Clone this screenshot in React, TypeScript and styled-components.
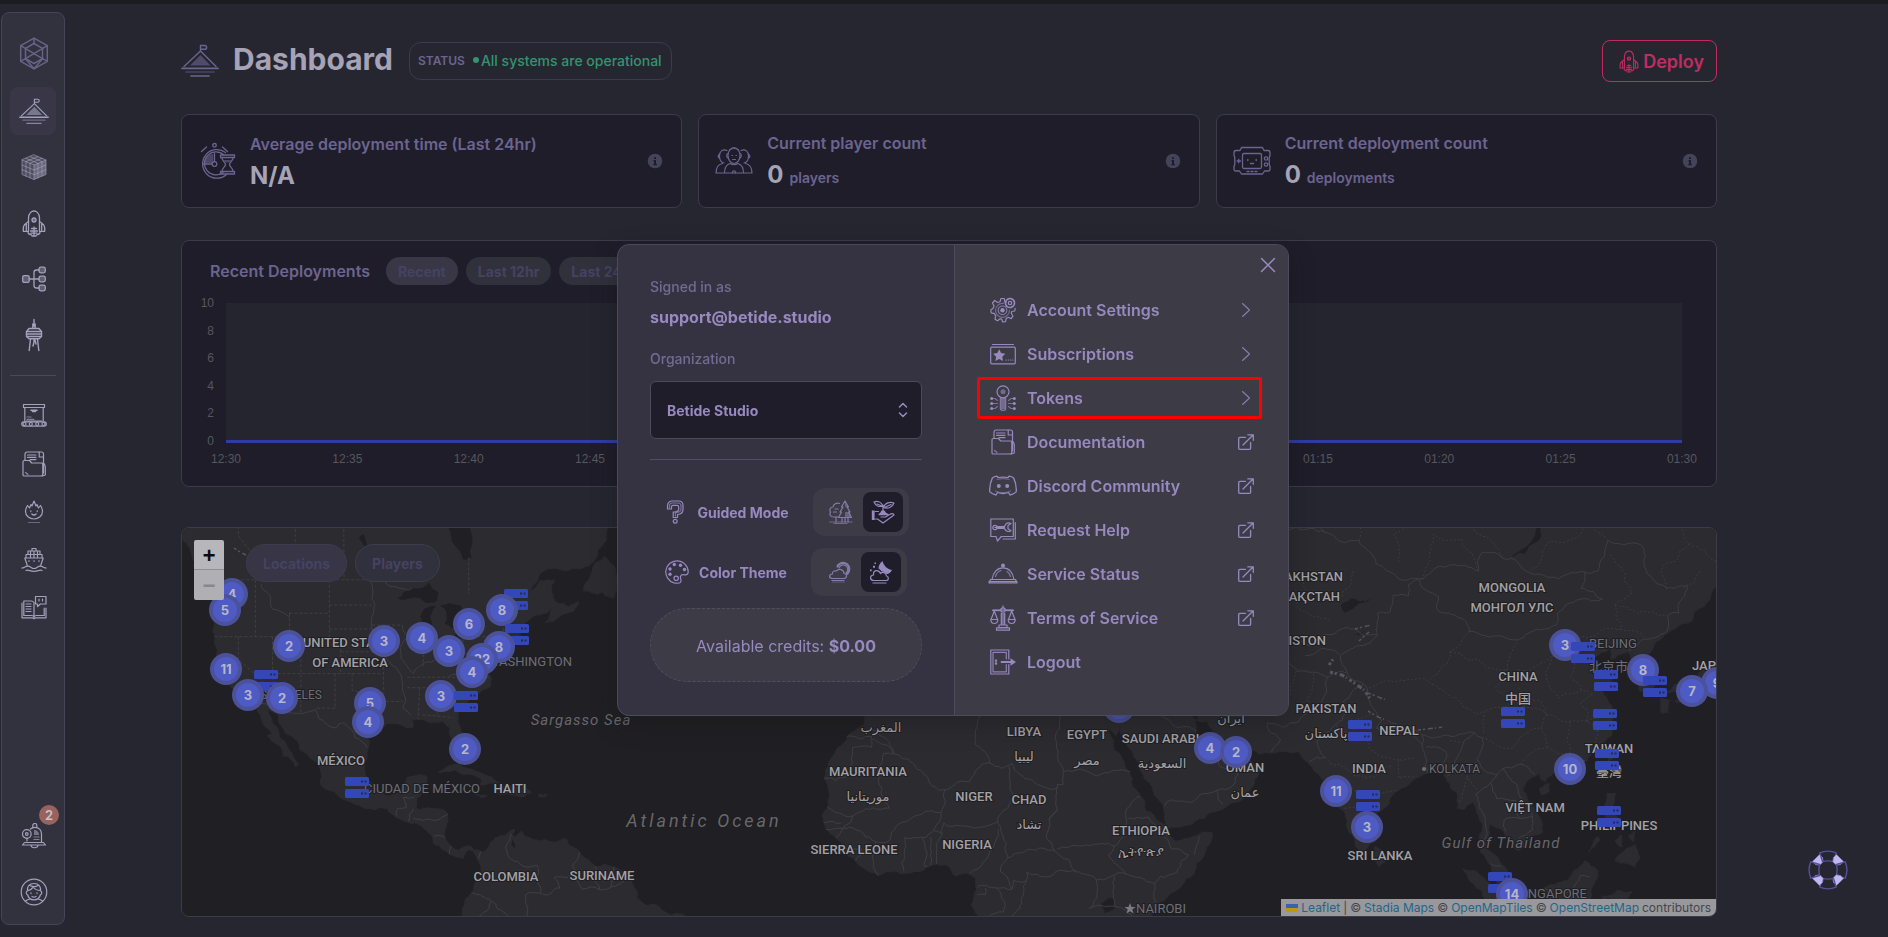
import React from "react";
import styled, { createGlobalStyle, css } from "styled-components";

const GlobalStyle = createGlobalStyle`
  *, *::before, *::after { box-sizing: border-box; }
  body {
    margin: 0;
    background: #262631;
    color: #6c6490;
    font-family: Inter, "Liberation Sans", sans-serif;
    font-size: 14px;
  }
  button, select, input { font: inherit; color: inherit; }
  h1, h2, p, ul, dl, dd, dt { margin: 0; padding: 0; }
`;

/* ------------------------------------------------------------------ icons */

type IconProps = { w?: number; h?: number };

const Glyph = ({
  w = 26,
  h = 26,
  box = "0 0 26 26",
  sw = 1.2,
  children,
}: IconProps & { box?: string; sw?: number; children: React.ReactNode }) => (
  <svg
    width={w}
    height={h}
    viewBox={box}
    fill="none"
    stroke="currentColor"
    strokeWidth={sw}
    strokeLinecap="round"
    strokeLinejoin="round"
    aria-hidden="true"
  >
    {children}
  </svg>
);

const Solid = { fill: "currentColor", stroke: "none" };
const Tint = { fill: "currentColor", fillOpacity: 0.6, stroke: "none" };

const HexLogo = () => (
  <Glyph w={30} h={33} box="0 0 30 33" sw={1.5}>
    <path d="M15 1.2 28.3 8.7v15.6L15 31.8 1.7 24.3V8.7Z" />
    <path d="M15 6.5 23.5 11.3v10.4L15 26.5l-8.5-4.8V11.3Z" />
    <path d="M1.7 8.7 23.5 21.7M28.3 8.7 6.5 21.7M6.5 21.7l-4.8 2.6M23.5 21.7l4.8 2.6M15 1.2v5.3M6.5 21.7 15 31.8l8.5-10.1" />
  </Glyph>
);

const Summit = ({ w = 30, h = 27 }: IconProps) => (
  <Glyph w={w} h={h} box="0 0 38 34" sw={1.4}>
    <path d="M3 22.5 19.5 7 35 22.5M19.5 7V1.5h4.2a1.8 1.8 0 0 1 0 3.8h-4.2" />
    <path {...Tint} d="M9 21.5 19.5 11 29.5 21.5Z" />
    <path d="M1 24.3h36" strokeWidth="1.7" />
    <path d="M5 28h28" strokeWidth="1.6" opacity=".5" />
    <path d="M10 32h18" strokeWidth="1.8" opacity=".75" />
  </Glyph>
);

const CubeGrid = () => (
  <Glyph sw={1}>
    <path {...Tint} d="M13 .8 25 6v14.5L13 25.5 1 20.5V6Z" fillOpacity=".25" />
    <path {...Tint} d="M13 11 25 6v14.5L13 25.5Z" fillOpacity=".35" />
    <path
      opacity=".6"
      d="M13 .8 25 6v14.5L13 25.5 1 20.5V6ZM1 6l12 5 12-5M13 11v14.5M5 7.7v14.5M9 9.3v14.5M17 9.3v14.5M21 7.7v14.5M1 11l12 5 12-5M1 15.700l12 5 12-5M5 4.300l12 5M9 2.600l12 5M21 4.300l-12 5M17 2.600l-12 5"
    />
  </Glyph>
);

const Rocket = ({ w = 24, h = 27 }: IconProps) => (
  <Glyph w={w} h={h} box="0 0 24 27" sw={1.3}>
    <path d="M6.500 21V7.500C7 3.500 9.500 1 12 1s5 2.500 5.500 6.500V21" />
    <circle cx="12" cy="10" r="2" fill="currentColor" fillOpacity=".5" />
    <path d="M6.500 11.500C3 13.500 1.300 15.500 1.300 18v3.300h5.200M17.500 11.500c3.500 2 5.200 4 5.200 6.500v3.300h-5.200M4.300 14v6M19.700 14v6" />
    <path d="M9.500 18.500h5M12 17v8.500M8.500 21h7M6 22.500c.5 1.700 2 2.300 3.500 2.300M18 22.500c-.5 1.700-2 2.300-3.500 2.300M9 23.200h6M10 26h4" />
  </Glyph>
);

const TreeNodes = () => (
  <Glyph sw={1.3}>
    <rect x="1.700" y="9.600" width="6.500" height="6.800" rx="1.500" fill="currentColor" fillOpacity=".4" />
    <rect x="18" y="1.200" width="6.300" height="5.600" rx="1.800" fill="currentColor" fillOpacity=".4" />
    <rect x="18" y="10.200" width="6.300" height="5.600" rx="1.800" fill="currentColor" fillOpacity=".4" />
    <rect x="18" y="19.200" width="6.300" height="5.600" rx="1.800" fill="currentColor" fillOpacity=".4" />
    <path d="M8.200 13H18M18 4h-2.500q-2.500 0-2.500 2.500v13q0 2.500 2.500 2.500H18" />
  </Glyph>
);

const Tower = () => (
  <Glyph w={20} h={34} box="0 0 20 34" sw={1.4}>
    <path d="M10 1.500V8M8.800 6v4M11.200 6v4M5 10.500h10l2.500 3.200v4.800L15 20.800H5l-2.500-2.300v-4.800Z" />
    <path d="M2.500 13.500h15M2.500 16h15M3 18.500h14M6.500 21 5.200 32.500M13.500 21l1.300 11.500M10 21v3l-1 4M11 22l1 4" />
  </Glyph>
);

const Conveyor = () => (
  <Glyph>
    <path d="M2.500 1.500h21v3h-21ZM3.800 4.500V18M22.200 4.500V18M5.500 18h15" />
    <rect x=".7" y="18.800" width="24.600" height="4.400" rx="2.200" />
    <circle cx="3.500" cy="21" r="1.500" /><circle cx="9.800" cy="21" r="1.500" />
    <circle cx="16.200" cy="21" r="1.500" /><circle cx="22.500" cy="21" r="1.500" />
    <path d="M10 7.200h6M11.500 8.500h3" strokeWidth="1.600" />
    <path d="M6 14h4M6 16.300h7" opacity=".7" />
  </Glyph>
);

const FolderDoc = () => (
  <Glyph>
    <path d="M4 9V3.300C4 2 4.800 1 6 1h14.500c1.200 0 2 .9 2 2v19" />
    <path d="M2 24V10.800q0-1.300 1.300-1.300h5.200l2.200 2.500H20q1.800 0 1.800 1.800V23q0 2-1.800 2H3.500Q2 25 2 24Z" />
    <path d="M6.500 4H15M6.500 6.300H15M9 8.600h6M18.200 1v5h4.300M22 12c2 1 2.300 3 2.300 5v7l-3 1" />
    <path d="M4.500 21.500 7 23.500" opacity=".8" />
  </Glyph>
);

const Flame = () => (
  <Glyph>
    <path d="M6.500 6.500C5 9 4.500 10.500 4.500 12.500a8.500 7.500 0 0 0 17 0c0-2-.5-3.500-2-6L17.500 9 16 5.500 15 7 13 2l-2 5-1-1.500L8.500 9Z" />
    <path d="M9.800 11.800v.8M16.200 11.800v.8M10.800 15q2.200 2 4.400 0" />
    <path d="M7.500 23.500h11" opacity=".5" />
  </Glyph>
);

const Ship = () => (
  <Glyph>
    <path d="M11 4V1.500h4V4M7 4h12v3.500H7ZM5 7.500h16v3.500H5ZM9.500 4v7M13 4v7M16.500 4v7M3.800 11h18.400l-2.500 7.500M3.800 11l2.500 7.500" />
    <path d="M7.500 14h1M12.500 14h1M17.500 14h1" />
    <path d="M.8 21c2.500 0 3-1.800 6-1.800s3.500 2.300 6.200 2.300 3.200-2.300 6.200-2.300 3.500 1.800 6 1.800M5 23.500c2-1.200 4 .8 8 .8s6-2 8-.8" />
  </Glyph>
);

const BookChat = () => (
  <Glyph>
    <path d="M13 7.500Q12 6 10.300 6H2.800v14.500h7.500Q13 20.500 13 22ZM1 8v14.800h10.500l1.500 1 1.500-1H25V13" />
    <path d="M5 9h5M5 11.500h5M5 14h5M5 16.500h5" />
    <path d="M23.200 13v7.500h-7.500Q13 20.500 13 22" />
    <path d="M14.500 1.500H25V9h-5.500l-3 2.500V9h-2Z" />
    <path d="M18 4v2M21.500 4v2" />
  </Glyph>
);

const Bell = () => (
  <Glyph>
    <path d="M3.500 19.500h19l2 2.500h-23ZM6 18v-3M20.500 19V11c0-4-2.800-6.700-6.500-6.700-2 0-3.500.7-4.500 1.700M11.800 4V2.500a1.500 1.500 0 0 1 4 0V4M10 22.500c.5 3 6.500 3 7 0" />
    <circle cx="5.800" cy="11" r="4.300" />
    <circle cx="5.800" cy="11" r="1.300" />
    <path {...Tint} d="M13 7v5h5c0-3-2-5-5-5Z" />
    <path d="M13 14h5M13 16.500h5" opacity=".7" />
  </Glyph>
);

const Avatar = () => (
  <Glyph w={28} h={28} box="0 0 28 28">
    <circle cx="14" cy="14" r="12.800" />
    <path d="M7.500 13c-1.700 0-1.700 3.500 0 3.500.7 3 3 5.300 6.500 5.300s5.800-2.300 6.500-5.300c1.700 0 1.700-3.500 0-3.500M7.500 13c-.7-4.500 1.800-7.500 6.500-7.500s7.200 3 6.500 7.500M7.500 12.500c3-.3 4.500-1.500 5.500-3.500 2 2.500 4.500 3.500 7.500 3.500M10 7.500c3 1.500 6 1.500 8 0" />
    <path d="M11 14.800v.8M17 14.800v.8M12 18.500q2 1.300 4 0M5.500 23c1.500-1.300 3-1.800 4.500-2M22.500 23c-1.500-1.300-3-1.800-4.500-2" />
  </Glyph>
);

const Stopwatch = () => (
  <Glyph w={38} h={38} box="0 0 38 38" sw={1.3}>
    <path d="M27.500 10.500A14.300 14.300 0 1 0 28.500 32.500" />
    <path d="M25.800 13A11.500 11.500 0 1 0 25 30.500" />
    <circle cx="16.500" cy="3.300" r="1.800" />
    <path d="M3.500 9.500 8.500 5M29.500 9.500 24.500 5" />
    <path {...Tint} d="M15.300 12v9H6c.3-5 4.300-9 9.300-9Z" />
    <path d="M16.500 11.500v8M5 22h9" />
    <circle cx="16.500" cy="22" r="2.300" />
    <path d="M22.500 13h14v2.500h-14ZM22.500 29.500h14V32h-14ZM24 15.500c0 4 3.500 4.500 3.500 7S24 25.500 24 29.500M35 15.500c0 4-3.500 4.500-3.500 7s3.500 3 3.500 7" />
    <path {...Tint} d="M25.500 18h8c-1 2-2 2.500-4 2.500s-3-.5-4-2.500Z" />
  </Glyph>
);

const Players = () => (
  <Glyph w={38} h={38} box="0 0 38 38" sw={1.2}>
    <ellipse cx="19" cy="13.500" rx="6" ry="8" />
    <path d="M13.200 11.500c-1.800-.3-2.300 4 .3 4.300M24.800 11.500c1.800-.3 2.300 4-.3 4.300M14.500 8q4.500-3 9 0M17 13.500h.5M21 13.500h.5M17.500 17.500h3" />
    <path d="M12 8.500C8 6.500 4.500 9 4.500 14c0 4 2 6.500 4.500 7M4.500 12.500c-1.800 0-1.800 3.500 0 3.500M26 8.500C30 6.500 33.500 9 33.500 14c0 4-2 6.500-4.500 7M33.500 12.500c1.800 0 1.800 3.500 0 3.500" />
    <path d="M1 31c0-5 1.500-8.500 6.500-9.500M37 31c0-5-1.500-8.500-6.500-9.500M9.500 31c0-5 1-8 5.500-9.500q4 2.500 8 0c4.500 1.500 5.500 4.500 5.500 9.500M1 31h36" />
    <path d="M17.500 31c0-3 3-3 3 0" />
  </Glyph>
);

const Console = () => (
  <Glyph w={38} h={38} box="0 0 38 38" sw={1.3}>
    <path d="M8.500 5.500h21l1.500 3h4q2 0 2 2.500v2.500l-.8 2v7l.8 2V27q0 2-2 2h-3.500l-2 3h-21l-2-3H3q-2 0-2-2v-2.500l.8-2v-7l-.8-2V11q0-2.500 2-2.500h4Z" />
    <rect x="9.500" y="11.500" width="19" height="15" rx="1.500" />
    <path d="M4 19h3.500M5.700 17.200v3.600M14.800 17.500v1M23.200 17.500v1M17.500 21.500h3M14 29.500h2M18 29.500h2M22 29.500h2" />
    <circle cx="33" cy="16.500" r="1.700" /><circle cx="33" cy="22.500" r="1.700" />
  </Glyph>
);

const Info = () => (
  <svg width="16" height="16" viewBox="0 0 16 16" aria-hidden="true">
    <circle cx="8" cy="8" r="7.300" fill="#45435a" />
    <path d="M7 4.200h2V6H7ZM6.500 7h2.500v4h1v1.200H6.300V11H7V8.200h-.5Z" fill="#1e1d29" />
  </svg>
);

const Question = () => (
  <Glyph w={24} h={24} box="0 0 24 24">
    <path d="M4.500 9V6Q4.500 1 9.500 1h6Q20 1 20 5.500v4q0 4.500-5.500 5v3h-4.300v-5.500q5.500.3 5.500-3v-2q0-1.700-1.700-1.700H10q-1.500 0-1.500 1.500V9Z" />
    <path d="M6.500 8V5.500Q6.500 3 9.500 3h5.500q3 0 3 3v3q0 3.300-5.600 3.700v3.300" opacity=".7" />
    <circle cx="12.200" cy="21.300" r="1.900" />
  </Glyph>
);

const Palette = () => (
  <Glyph w={24} h={24} box="0 0 24 24">
    <path d="M12 .8a11.200 11.200 0 0 0-3 22c3 .7 5.500.5 6.500-.5 1.500-1.500-.5-3.800 0-5.800.5-1.700 2-2.200 4-1.700 2.500.5 3.700-1 3.700-2.800A11.200 11.200 0 0 0 12 .8Z" />
    <circle {...Solid} cx="9.300" cy="4.500" r="1.700" /><circle {...Solid} cx="15.500" cy="5.200" r="1.700" />
    <circle {...Solid} cx="5" cy="9" r="1.700" /><circle {...Solid} cx="5" cy="14.300" r="1.700" />
    <circle {...Solid} cx="19.500" cy="9.500" r="1.700" />
    <circle cx="11.200" cy="18.300" r="2.200" />
  </Glyph>
);

const Forest = () => (
  <Glyph w={24} h={24} box="0 0 24 24">
    <path d="M9.500 17H4.500C1.500 17 0 14.500 1.500 12.300 0 9.500 1.500 7 4 7c.5-3 3.500-4.500 6.500-3.500M4.500 12h3M6 9h3" />
    <path d="M16 1 12.500 7h1.500l-3 5h1.500l-3 5.500h13L19.500 12H21l-3-5h1.500Z" />
    <path {...Tint} d="M16 2 19 7H16v5h4.500l2 5H16Z" />
    <path d="M7 17v5M16 18v4M19 18v4M13 18v4" />
    <path d="M.8 22h22.400M5 23.500h13" opacity=".75" />
  </Glyph>
);

const Sprout = () => (
  <Glyph w={24} h={24} box="0 0 24 24">
    <path d="M12 12V5M12 6C10 1.500 6 .8 3 2c1.500 3.500 5 5.500 9 4ZM12.500 7.500C14 2.500 19 1.500 23 3c-1.500 4-6 6.500-10.500 4.500ZM6 4l5 2M14.500 7 20 4.500" />
    <path {...Solid} d="M7.500 14q2-1 3-3.500h3q1 2.500 4 3.500v1.300h-10Z" />
    <path {...Solid} d="M.8 10.500h2.800v9.500H.8Z" />
    <path d="M4 11.500h3.500M4 19h2.500l5.500 4 11-8c-.5-1.700-2.500-1.700-4-.7L14.500 17H10" />
  </Glyph>
);

const CloudSun = () => (
  <Glyph w={24} h={24} box="0 0 24 24">
    <path d="M6 18.500h10.500c4 0 4-5 .5-5 0-4-5-5.500-7.500-2.500-2.500-.8-4.500.8-4 3-4 .3-4 4.500.5 4.500ZM5 20.500h12" />
    <path d="M5.500 22h12" opacity=".5" />
    <path d="M12 8a4.500 4.500 0 1 1 7 5" />
    <path d="M10.500 6.500a6.200 6.200 0 0 1 11-.5c1.500 3 .5 6-1.500 8" strokeWidth="2.200" strokeDasharray="2.600 .9" />
  </Glyph>
);

const CloudMoon = () => (
  <Glyph w={24} h={24} box="0 0 24 24">
    <path d="M5 20.500h12c3 0 3-4 .5-4.500-.5-3.500-4-4.500-6-2.500C9.500 9 4 10 4.500 15c-4 .3-4 5.500.5 5.500ZM4 23h13" />
    <path {...Solid} d="M13.500 1c1 4 4 8 9.500 9-1.500 3-4 4.500-5.500 4-1.500-2-3.500-2.800-5-2.500-.7-1.500-2-2.500-3-3C9.500 5.500 11 3 13.500 1Z" />
    <path {...Solid} d="M4 5.800h2v2H4ZM1 9.500h1.700v1.700H1ZM5.500 2.500H7V4H5.500Z" />
  </Glyph>
);

const Gears = () => (
  <Glyph>
    <path d="M16 5.300 14.800 5 14.300 1.500H11L10 4.700 7.500 5.500 4.700 3.500 2.500 6 4 9l-1 2.500L.8 13l.4 2.800 3.200.8 1.300 2.300L5 22.200l2.500 1.500 2.700-1.900h1.300l1.200 3.200 2.800-.3.700-3.200 2-1.200 3 1.300 1.800-2.400-1.700-3 .5-1.700 3-.5.3-2.700" />
    <circle cx="12.500" cy="13.300" r="7" opacity=".6" strokeDasharray="34 10" />
    <circle cx="12.500" cy="13.300" r="4.300" opacity=".8" />
    <circle {...Solid} cx="12.500" cy="13.300" r="2.200" />
    <circle cx="20" cy="6" r="4.500" strokeDasharray="2.300 1.200" strokeWidth="1.700" />
    <circle cx="20" cy="6" r="1.700" />
  </Glyph>
);

const Card = () => (
  <Glyph>
    <rect x=".7" y="6.200" width="24.600" height="16.600" rx="1" />
    <path d="M2.500 3.500h21" />
    <path {...Solid} d="m9.200 8.300 1.900 3.800 4.200.6-3 3 .7 4.200-3.800-2-3.800 2 .7-4.200-3-3 4.200-.6Z" />
    <path d="M16 19h.3M18.300 19h.3M20.600 19h.3M22.800 19h.1" />
  </Glyph>
);

const KeyToken = () => (
  <Glyph>
    <circle cx="13" cy="6.800" r="6" />
    <circle {...Tint} cx="13" cy="6.800" r="2.500" />
    <path {...Tint} d="M10.300 13h5.400v11.500h-5.400Z" />
    <path d="M10.300 13v11l1.500 1.500h2.700l1.200-1.200V13" opacity=".7" />
    <path d="M2.500 13.500H5l2.500 2M23.500 13.500H21l-2.500 2M2.500 18.500h5M23.500 18.500h-5M2.500 23.500H5l2.500-2M23.500 23.500H21l-2.500-2" opacity=".7" />
    {[13.5, 18.5, 23.5].map((y) => (
      <g key={y}>
        <circle {...Solid} cx="1.700" cy={y} r="1.500" />
        <circle {...Solid} cx="24.300" cy={y} r="1.500" />
      </g>
    ))}
  </Glyph>
);

const Discord = () => (
  <Glyph w={28} h={26} box="0 0 28 26" sw={1.3}>
    <path d="M9 4.500c1.500-.6 8.500-.6 10 0l1-1.300c2 .3 3.800 1 4.600 1.700 1.900 4 3 9.500 2.600 14-1.800 1.700-4 2.600-6.200 3.100l-1.500-2.500c-3.500 1.300-7.500 1.300-11 0L7 22c-2.300-.5-4.400-1.400-6.200-3.100C.4 14.400 1.500 8.900 3.400 4.900 4.200 4.200 6 3.500 8 3.200Z" />
    <path d="M8 6.500q6-2 12 0M6.500 18q7.500 3.500 15 0" opacity=".5" />
    <circle {...Solid} cx="9.800" cy="13" r="2" /><circle {...Solid} cx="18.200" cy="13" r="2" />
  </Glyph>
);

const WrenchChat = () => (
  <Glyph>
    <path d="M.8 2h22.500v17.500h-12L7.500 24 6 19.500H.8Z" />
    <path d="M25.300 5.500V22H13" />
    <circle cx="5" cy="10.500" r="2.200" />
    <path d="M7 9.500h7.500c1-3.500 4-4.500 6.500-3l-3 2v3.200l3 2c-2.500 1.700-5.500.5-6.500-2.200H7M4.800 10.500h9.700" />
  </Glyph>
);

const Cloche = () => (
  <Glyph w={30} h={26} box="0 0 30 26">
    <path d="M4 18.500C5 11 9.500 6.800 15 6.800S25 11 26 18.500ZM2.500 18.500h25L29 22H1ZM1 20.700h28" />
    <circle {...Solid} cx="15" cy="4.500" r="2" />
    <path d="M7.500 15.500C8.500 12 11 10 13 9.500M19 10.500c2 1 3 3 3.500 5" opacity=".8" />
  </Glyph>
);

const Scales = () => (
  <Glyph>
    <path {...Tint} d="M2.500 4h21v2.300h-21ZM11.300 8h3.400v12h-3.400Z" />
    <circle cx="13" cy="5" r="2.200" />
    <path d="M13 .8v1.700M2.500 5.500h8M15.500 5.500h8M4.300 6 1 14.500M4.300 6l3.200 8.500M21.700 6l-3.200 8.500M21.700 6l3.300 8.500M.7 14.500h7.200q-.3 4-3.600 4t-3.600-4ZM18.100 14.500h7.200q-.3 4-3.600 4t-3.600-4Z" />
    <path d="M11.300 8v11.500M14.700 8v11.500M9 20h8v2.500H9ZM6.500 22.800h13v2.400h-13Z" />
  </Glyph>
);

const Door = () => (
  <Glyph>
    <path d="M18.800 10V1H.8v24h18v-9.500" />
    <path d="M16.300 10V3.300H3v19.500h13.300v-7.300" opacity=".9" />
    <path d="M6 10.500v5M5.300 11.800h1.400M5.300 14.700h1.400" />
    <path d="M11.500 13h10" strokeWidth="1.800" />
    <path {...Solid} d="M20.500 9.300 26 13l-5.500 3.700Z" />
  </Glyph>
);

const Chevron = () => (
  <Glyph w={16} h={16} box="0 0 16 16" sw={1.1}>
    <path d="M4.500 1.500 11.500 8l-7 6.500" opacity=".85" />
  </Glyph>
);

const External = () => (
  <Glyph w={16} h={16} box="0 0 16 16" sw={1.3}>
    <path d="M7.500 3.300H1.800q-1.100 0-1.100 1.100v9.800q0 1.100 1.100 1.100h9.700q1.100 0 1.100-1.100V8.500M5 11 15 1M9.800.8h5.500v5.500" />
  </Glyph>
);

const Cross = () => (
  <Glyph w={16} h={16} box="0 0 16 16" sw={1.5}>
    <path d="M1.500 1.500 14.500 14.500M14.500 1.500 1.500 14.500" />
  </Glyph>
);

const UpDown = () => (
  <Glyph w={10} h={16} box="0 0 10 16" sw={1.5}>
    <path d="M1.500 5 5 1.500 8.500 5M1.500 11 5 14.500 8.500 11" />
  </Glyph>
);

const Buoy = () => (
  <svg width="42" height="42" viewBox="0 0 42 42" fill="none" aria-hidden="true">
    <g stroke="#545099" strokeWidth="1.4" strokeLinejoin="round">
      {[0, 90, 180, 270].map((a) => (
        <g key={a} transform={`rotate(${a} 21 21)`}>
          <path d="M12.500 5.500 5.500 12.500 8.500 15.500 12.700 16.200 16.200 12.700 15.500 8.500Z" fill="#c0b7ee" stroke="#7f79bd" strokeWidth=".8" />
          <path d="M12.800 3.800Q21 .4 29.200 3.800L26.500 12.600Q21 11.200 15.500 12.600Z" />
        </g>
      ))}
    </g>
  </svg>
);

/* -------------------------------------------------------------- world map */

type Pt = [number, number];

/* Web-mercator at zoom level 3, in pixels of the visible canvas */
const project = ([lon, lat]: Pt): Pt => [
  739 + 5.689 * lon,
  372.5 - 326 * Math.asinh(Math.tan((lat * Math.PI) / 180)),
];

const noise = (x: number, y: number) => {
  const s = Math.sin(x * 12.9898 + y * 78.233) * 43758.5453;
  return s - Math.floor(s) - 0.5;
};

const split = (a: Pt, b: Pt, out: Pt[]) => {
  const dx = b[0] - a[0];
  const dy = b[1] - a[1];
  const len = Math.hypot(dx, dy);
  if (len > 5) {
    const k = noise(a[0] + b[0], a[1] + b[1]) * 0.32;
    const m: Pt = [(a[0] + b[0]) / 2 - dy * k, (a[1] + b[1]) / 2 + dx * k];
    split(a, m, out);
    split(m, b, out);
  } else {
    out.push(b);
  }
};

const trace = (pts: Pt[], closed: boolean, natural = true) => {
  const p = pts.map(project);
  if (closed) p.push(p[0]);
  const out: Pt[] = [p[0]];
  for (let i = 1; i < p.length; i++) {
    if (natural) split(p[i - 1], p[i], out);
    else out.push(p[i]);
  }
  return "M" + out.map((q) => `${q[0].toFixed(1)} ${q[1].toFixed(1)}`).join("L") + (closed ? "Z" : "");
};

const parse = (s: string): Pt[] => s.split(" ").map((q) => q.split(",").map(Number) as Pt);

const LAND = [
  "-134,57 -130.5,54.5 -128.5,52.5 -127.5,51 -124.5,49.6 -123,49 -122.5,47.5 -124.7,48.4 -124,46.2 -124.1,44 -124.5,42.8 -124.1,41 -123.8,39.3 -122.5,37.7 -121.9,36.6 -120.6,34.6 -118.5,34 -117.2,32.7 -116.6,31.5 -115.9,30.2 -115,29 -114.1,28 -115,27.8 -114.3,27.1 -113,26.4 -112.2,25.5 -112.1,24.6 -111,24.3 -110,22.9 -109.4,23.2 -110.3,24.3 -111,25.5 -111.7,26.7 -112.8,28 -113.8,29.5 -114.7,31.2 -114.8,31.8 -113.1,31.2 -112.2,29 -111,27.9 -109.5,26.8 -109.3,25.7 -108,25 -106.8,23.9 -105.6,22.5 -105.3,21.3 -105.6,20.3 -104.3,19.1 -102.2,17.9 -101,17.3 -99.5,16.7 -97.5,15.9 -96,15.7 -94.8,16.2 -93.8,15.9 -92.3,14.5 -91,13.9 -89.5,13.4 -87.7,13 -87,12.3 -85.8,11.1 -85.7,10 -84.7,9.7 -83.6,8.7 -82.8,8.1 -81.5,7.6 -80.4,7.4 -80.1,8.3 -79.5,8.9 -78.5,8.3 -78,7.3 -77.3,6 -77.4,4 -78.6,2.2 -79,1.4 -80.1,.3 -80.6,-1.5 -80.3,-3.3 -80,-8 -34,-8 -38,-3.8 -40,-2.9 -44,-2.6 -46,-1.1 -48.3,-.9 -50,.5 -50,1.8 -51.3,4.3 -52.8,5.3 -54,5.9 -57.2,6 -58.5,7.2 -60,8.4 -62,9.9 -62.3,10.7 -64.5,10.2 -66,10.6 -68,10.6 -69.8,11.4 -70.2,12.1 -71.3,11.1 -71.9,11.6 -71.4,12.4 -73,11.4 -74.8,11 -75.6,10.3 -76.9,8.5 -77.4,8.6 -79.5,9.6 -81.2,8.8 -82.3,9.2 -83.4,10.4 -83.8,11.5 -83.5,13 -83.2,15 -84.2,15.8 -86,15.9 -88,15.7 -88.8,16 -88.1,18 -87.5,19.4 -86.9,21.3 -88.2,21.6 -90.3,21.1 -90.7,19.7 -91.8,18.6 -94,18.1 -95.8,18.9 -97.2,20.7 -97.8,22.5 -97.4,25 -97.2,27.5 -95.5,28.8 -93.8,29.7 -91.5,29.5 -89.3,29.1 -89.5,30.3 -87.5,30.3 -85.5,29.9 -84,30 -82.8,29 -82.7,27.7 -81.8,26.2 -81,25.2 -80.3,25.4 -80.1,26.8 -81,29 -81.4,30.8 -80.3,32.4 -78.6,33.8 -77,34.7 -75.6,35.3 -76,37 -75.4,38 -74.8,39.2 -74,40.5 -72,41.1 -70.3,41.7 -70.8,42.8 -69,44.1 -67,44.8 -64.8,45.7 -66.1,43.8 -64.5,44 -61,45.3 -60.2,46.4 -62,45.8 -64,46.3 -65,47.6 -64.4,49 -67,48.9 -70,47.2 -67,49.6 -65,50.3 -60,50.2 -57,51.5 -55.8,53 -56,57",
  "-128,50.7 -125.5,50.2 -123.4,48.5 -125,48.8",
  "-59.3,47.7 -58.4,49 -57,51 -55.7,51.6 -53,48.5 -54,46.8 -56,47.5",
  "-84.9,21.9 -83,23 -81,23.2 -77.5,21.9 -75,20.7 -74.2,20.2 -77.5,19.9 -77.2,20.6 -79,21.6 -82,22.4",
  "-74.4,18.4 -73,19.9 -70,19.8 -68.5,18.6 -71,18.1 -72,18.2",
  "-78.3,18.3 -76.3,18.1 -77.2,17.8",
  "-67.2,18.4 -65.7,18.4 -66,18 -67.2,18",
  "-9.8,31 -10,29.5 -12.9,27.8 -14.8,25.8 -16.2,23.6 -17,21 -16.1,18.5 -16.5,16 -17.4,14.7 -16.7,12.5 -15,10.9 -13.3,9 -13,8 -11.4,6.8 -9,5 -7.5,4.4 -4.5,5.2 -2,4.8 1,5.9 2.7,6.4 4.4,6.3 5.4,5.2 6.1,4.3 8.5,4.6 9.6,3.9 9.8,2 9.3,.5 8.8,-.8 10,-2.6 12,-5 12,-8 39.5,-8 38.8,-6 39.3,-4.5 41,-2 42.8,0 45.5,2.2 48,4.7 49.8,8 51,10.4 51.2,11.8 48,11.2 44.5,10.4 43.2,11.5 43.2,12.7 41,14.8 39.5,15.6 38.5,18 37.2,19.5 37.1,21 35.8,23 35.5,24 33.9,27 32.6,29.8 32.5,31.1 31,31.5 25,31.6 20,31 20,34 -9.8,34",
  "32.5,31.2 32.7,29.9 34.2,27.8 34.9,29.4 35.2,28 37,25.5 38.8,22 39.2,21 40.8,19.5 42.6,16.5 42.8,14.5 43.4,12.7 45,12.8 48.5,14 52.2,15.6 55,17 57.8,19 58.6,20.8 59.8,22.5 58,23.8 56.4,24.9 56.3,26.2 54,24.1 51.6,24.3 51.3,26 50.2,26.5 48.5,28.3 48,30 50.3,30 51.5,27.8 54.5,26.6 57,27 57.3,25.8 61.6,25.1 66.5,25.3 67.5,23.9 69,22.3 70.5,20.8 72.6,21.5 72.8,19 73.5,16 74.8,13 76.3,9.8 77.5,8.1 78.2,9 79.9,10.3 80.2,13.3 80.1,15.2 82.3,16.7 85,19.5 87,21 88.5,21.7 90.5,22.4 91.8,22.4 92.5,20.5 94.3,18.5 94.3,16 95.5,15.8 97,17 97.7,15.5 98.6,12 98.3,8.5 100.3,6 101.3,3 103.5,1.3 104.2,1.5 103.4,4 102.2,6.2 100.2,8.5 99.3,9.5 100,13.3 101,12.7 102.5,12 103.6,10.5 105,8.7 106.7,10.3 109.2,11.8 109.2,13.5 107.5,16.4 105.8,19 106.8,20.7 108.5,21.8 109.7,20.4 110.5,21.3 114,22.3 117,23.7 119.5,25.7 121.5,28.5 121.9,31 119.8,34.5 119.3,35.1 122.5,37.2 120.8,37.8 119,37.3 117.8,39 121.5,40.8 121.2,39 124.3,40 125.2,38 126.5,36.5 126.3,34.5 129,35.2 129.4,37 127.5,39.5 130.7,42.3 132.5,43 135.5,44 138.5,46.5 140.5,49 141.3,52.5 142,57 30,57 30,31.2",
  "79.8,9.5 81.3,8.5 81.8,7 80.5,6 79.8,7.5",
  "121,25.2 121.9,25 120.8,22 120.1,23",
  "108.7,19.3 110.5,20.1 110.5,18.8 109.2,18.2",
  "120.6,18.5 122.2,18.5 121.5,16 124,13 123.5,12.8 121,13.7 120,15.5",
  "122,7 123.5,8.6 125.5,9.8 126.4,7.5 125.5,5.8 124,6.5",
  "117.3,8.4 119.3,10.5 119,11.2 118,9.6",
  "122,10.5 123,11.5 123.3,9.4 122.4,9.8",
  "124.4,11.3 125.5,12.3 125.2,10.3",
  "109,1.5 111.5,2.8 113.5,3.5 116.7,7 119,5.2 117.8,2 117.5,-6 110,-6",
  "95.3,5.6 97.5,5.2 100.5,2.3 103.5,0 106,-3 104,-6 101,-3 98.7,1.5",
  "119.8,.8 125,1.6 124.3,.4 120.5,.5 121,-2 119.5,-3",
  "130,33.5 131.8,33.2 131.3,31.3 130.2,31.2",
  "131,34.3 132.5,35.5 136,35.8 137,37.3 139,38 141,41 142,39 141,35.5 139,34.8 136.8,34.5 135.5,33.5 135,34.6",
  "132.5,33 134.5,34.2 134.2,33.4 133,32.8",
].map((s) => trace(parse(s), true)).join("");

const WATER = [
  "-82.3,57 -82.2,53 -80.5,51.3 -79,51.5 -79,54 -79.5,57",
  "-92,46.8 -89.5,48 -86.5,48.7 -84.8,47.5 -85,46.6 -87.5,46.5 -90.5,46.7",
  "-87.8,42 -87,41.7 -86.3,42.5 -86.3,44.5 -85.2,45.8 -87.2,45.6 -88,44.6 -87.7,43.5",
  "-84.5,45.9 -81,46 -79.9,44.6 -81.5,44.9 -81.7,43.3 -82.4,43.1 -83.8,43.7 -83.4,45.1",
  "-83.3,41.7 -81.5,41.6 -79,42.8 -81,42.7",
  "-79.7,43.3 -76.5,43.5 -76.7,44.1 -79,43.8",
  "-98.8,53.5 -97,50.6 -96.3,51 -98,54",
  "-71.8,10.6 -71.3,9.2 -72,9.8",
  "31.8,-.4 34,.3 34,-1.5 32.3,-2.3",
  "103.8,51.6 106,51.9 108.5,53.3 110,55.8 108,54 106,52.5",
  "73.8,46 75.5,46.8 79,46.7 78,46.3 74.5,45",
  "76.3,42.3 78,42.7 77,42.2",
  "46.8,33 48.5,30.2 48,30.5",
].map((s) => trace(parse(s), true)).join("");

const STATE_LINES = [
  "-123,49 -95.2,49", "-124,46 -119,46", "-124.2,42 -111,42", "-120,42 -120,39 -114.6,35", "-117,49 -117,42",
  "-114,42 -114,36", "-111,45 -111,42", "-111,41 -109,41", "-111,45 -104,45", "-104,49 -104,41", "-109,41 -102,41", "-109,41 -109,31.3",
  "-114,37 -94.6,37", "-102,41 -102,37", "-103,37 -103,32", "-103,32 -106.5,32", "-104,46 -96.6,46", "-104,43 -96.5,43",
  "-102,40 -95.3,40", "-100,37 -100,34.6 -94.4,33.6", "-94.6,40 -94.4,33", "-96.5,43.5 -91.2,43.5", "-96,40.6 -91.7,40.6", "-94,33 -91.1,33",
  "-90.3,36.5 -75.9,36.5", "-90.3,35 -83.1,35", "-88.1,35 -88.4,30.4", "-85.6,35 -85,31", "-87.6,31 -82.2,30.6", "-87.5,41.7 -87.5,38",
  "-84.8,41.7 -84.8,39.1", "-80.5,42.3 -80.5,39.7 -75.7,39.7", "-79.8,42 -75,42", "-73.5,45 -73.3,42", "-72.5,45 -72.4,42.7",
  "-120,60 -120,53.8 -114,49", "-110,57 -110,49", "-101.5,57 -101.4,49", "-95.2,53 -95.2,49", "-79.5,51.5 -79.5,47.3",
].map((s) => trace(parse(s), false, false)).join("");

const RIVER_BORDERS = [
  "-114,45.5 -116,48.5", "-114,45.5 -111,44.5", "-95.2,49 -91.5,48 -89.5,48", "-96.6,49 -96.5,43 -95.3,40 -91.2,36 -91,32 -89.7,31",
  "-91.2,43.5 -90.2,41.8 -91.5,40 -89.2,37 -84.8,39 -82.5,38.3 -80.5,40.6", "-117.1,32.5 -114.8,32.6 -111,31.3 -108.2,31.4 -106.4,31.8 -104.5,29.6 -103,29 -101.4,29.8 -99.5,27.5 -97.4,25.9",
  "-83,36.6 -80.3,37.5 -77.6,39.3", "-92.2,14.6 -92,16 -90.5,16.1 -91,17.8 -89.1,17.9", "-90.1,13.8 -89.2,15.9", "-89.2,14.4 -87.5,13.9 -85,14 -83.2,15", "-85.6,11.2 -83.7,11",
  "-82.9,8.1 -82.6,9.5", "-77.4,8.6 -77.8,7.3", "-72,11.6 -73,9.2 -72,7.2 -67.5,6.2 -67.3,3.5 -66.9,1.3 -69.5,1 -69.8,-4.2", "-60,8.4 -61.3,6 -60.7,5.2 -62,4.1 -64.5,4 -63.5,2.2 -66.9,1.3",
  "-60.7,5.2 -59.6,2 -56.5,1.9 -54.5,2.3 -51.6,4.2", "-57.2,6 -58,4 -56.5,1.9", "-54,5.8 -54.5,2.3", "-79,1.4 -75.5,-.1 -72.9,-2.4 -69.9,-4.2",
  "-80.2,-3.5 -78.5,-4 -75.5,-.1",
].map((s) => trace(parse(s), false)).join("");

const NATION_LINES = [
  "-13,27.7 -8.7,27.7 -8.7,26 -12,26 -12,23.5 -13,21.3 -17,21", "-8.7,27.3 -4.8,25 -6.6,25 -5.6,16 -11,15.3 -12,14.7 -16.4,16.2", "-8.7,28.7 -4.8,25 1.2,21.1 3.2,19 4.3,19.1 12,23.5 9.5,26.5 9.9,30 10.5,32",
  "12,23.5 14.2,22.6 16,23.4 24,19.5 24,20 25,20 25,31.6", "25,22 36.8,22", "24,19.5 24,15.7 22.5,14 22,11 23.5,8.7 19,9 15.3,7.5 14,5 14.5,4.7 16,2", "15.5,22.9 15.7,17 13.5,14.3 13.5,13.5 14,12.8 15,10 15.3,7.5",
  "4.2,19.1 4.2,16.7 3.5,15.3 .2,15 -2,14.1 -4.3,13 -5.5,10.5 -8,10.3 -8.5,7.5 -7.5,4.4", "3.5,15.3 2.2,12.2 .9,11 -2.8,11 -3,5.1", "3.7,11.9 2.7,7.9 2.7,6.4", "2.2,12.2 3.6,11.7 4,13.5 7,13 13.5,13.7", "1.7,11 1.6,6.2", ".2,11 .6,6 1.2,6",
  "13.6,12.5 12,8.5 11,6.8 8.6,4.8", "-11.4,12.3 -13.7,12.6 -16.7,12.4", "-13.7,12.6 -12,14.7", "-11.4,12.3 -8,10.3", "-13.2,9.1 -10.6,9.2 -10.3,8.5 -11.5,6.9", "-15,10.9 -13.7,12.6", "-17,13.5 -14,13.5",
  "9.8,2.2 13.3,2.2 16,2 16.2,3.5 18.5,3.5 18.6,5 22.5,4.2 27.4,5 30.8,3.6 31,2.3 29.6,-1.4", "9.8,1 11.3,1 11.3,2.2", "11.3,-4 13,-2.3 14.5,-2 14,1.4 13.3,2.2", "18.5,3.5 17.7,-.5 15.5,-4 12,-5",
  "23.5,8.7 27.4,5", "24,15.7 22.5,14", "24,9 28,9.5 33,10 34,9.5 33,8 35.9,4.7 30.8,3.6", "34,9.5 36,14.5 37,17 38.6,18", "36.5,14.3 40,14.5 42.4,12.5 43.2,11.3", "42.8,11 44,9 47,8 45,5 42,4.2 41,3 35.9,4.7", "41,3 41,-.9 41.5,-1.7", "34,4.2 34,0 34,-1 37.7,-3.1 39.2,-4.7", "48,8 48.9,11.2", "29.6,-1.4 30.5,-1 34,-1",
  "42.8,16.4 44,17.4 47.5,17 52,19 53.1,16.7", "52,19 55,20 55.7,22 55.2,22.7 52.6,22.9 51.5,24.5", "55.2,22.7 56.3,24.9", "39,32 42,31 44.7,29.2 47.5,29 48.4,28.5",
  "61.6,25.2 63.2,27.2 60.9,29.8 66.3,29.9 69.3,32 71.2,34.2 71.5,36.5 74.9,37.2", "68.2,23.7 71,24.4 69.6,27 72.9,29.5 74.6,31.2 74.3,33 77.8,35.5 74.9,37.2", "77.8,35.5 79,32.5 81,30.2 80.1,28.9 88.1,26.4 88.1,27.9 82,30.2",
  "88.1,27.9 91.7,27.8 97.3,28.2 94.6,25 92.5,21.3", "88.1,26.4 88.8,24.2 89,21.9", "88.8,26 92.4,25 91.8,23 92.5,22", "97.3,28.2 98.7,27.5 97.7,24 99.3,22.1 101.2,21.6 100.1,20.3 97.5,18.4 99.2,14 99.5,11.5 98.7,10.2",
  "101.2,21.6 102.2,22.5 105.3,23.3 108,21.6", "102.2,22.5 104.7,20 105.5,17.6 107.5,14.6 105.2,14.3 102.5,14 102.8,12", "107.5,14.6 107.5,12.3 105,10.7", "100.1,20.3 101.2,17.6 104.5,17.3 105.2,14.3", "100.1,6.5 102,6", "109.7,2 111.5,1 114.5,1.5 115.8,4.3 117.6,4.2",
  "74.9,37.2 73.7,39.5 76,40.5 80.2,42.2 80.2,45 82.5,45.2 83,47.2 85.7,47.1 85.6,48.4 87.4,49.1", "66,37.3 69,37.2 71.5,36.5", "56,41.3 58.6,42.7 61,41.2 66.5,37.3", "61.9,43.5 66,42 68.5,40.8 71,42.3 75.5,43 80.2,42.2", "67.5,39.5 70.5,40.5 73.5,39.6",
  "87.4,49.1 91,50.5 98,50 98.5,52 102.3,51.4 107,49.8 113.5,49.6 116.7,49.9 119,50 120.8,53.3 126,53 127.5,50 131,48 134.7,48.3 133.2,45 131.2,44.7 130.7,42.4 126.9,41.7 124.4,40.1", "87.4,49.1 91,47 91,45.2 95.5,44.2 96.4,42.7 102,42.1 105,41.6 111.7,43.5 111.9,45 115.8,46.7 119.8,46.7 116,48 116.7,49.9",
  "126.8,37.8 128.3,38.6", "61,54 66,54.7 71,54.2 77,53.3 80,50.8 87.4,49.1", "66,54.7 69,55.5 71,54.2",
].map((s) => trace(parse(s), false)).join("");

const PROVINCES = [
  "78.4,34.5 82,36 89,36 92,34.5 95.5,32 99,31.5 98.7,28", "96.4,42.7 93,40 91,37 89,36", "93,40 98,39 103,37.5 101,35 104,33 102,32 99,31.5", "103,37.5 105,41.6", "105,37.5 108,38 111,39.5 114,41 119,42.5 123,43 122,46 125,47.5 121,52", "123,43 127,42", "122,46 126,45 131,44.7",
  "111,39.5 110.5,35 112,33.5 116,34.7 118,34", "114,41 114,36.5 116,34.7", "105,35 109,33 110,31 109,29 106,28 104,25.8 102,26 98.7,27.5", "104,33 108,32 110,31", "109,29 110,26 106,24 105.3,23.3", "110,26 114,25 117,23.7", "110,31 114,30 117,30 119,28 117,25", "114,30 113.5,27 114,25", "117,30 116,33 118,34", "117,30 121,31",
  "72.9,29.5 76,28 78,27.5 81,24.5 84,24 87,24.5", "71,24.4 74,23 76,21.5 80,21.5 83,23", "73,20 78,18 81,18.5 84,19", "74.5,16 77,16 80,13.5", "76.5,12 78,12.5 80,13.5", "76,28 77,30.5 79,31", "84,24 84,21 87,21.5", "93,27 95,26.5", "98,24 96,21 98,19", "96,21 94.5,17",
  "88,49 90,54 95,53.5 98,50", "102,51.5 98,54 96,57", "107,50 110,53 116,54 119,57", "120.8,53.3 118,55 123,57", "131,48 130,50 135,53 132,57", "77,53.3 76,57", "84,51 83,54 88,55 90,57", "61,54 62,57", "66,37.3 65,34 62,31", "69,37 68,33", "68,50 66,46 72,44", "76,50 74,47", "135,53 140,51", "134,48 137,50",
].map((s) => trace(parse(s), false)).join("");

type LabelKind = "country" | "city" | "sea";
type MapLabelData = { t: string; x: number; y: number; kind?: LabelKind; anchor?: "start" | "middle" | "end"; size?: number };

const LABELS: MapLabelData[] = [
  { t: "UNITED STATES", x: 168, y: 114 },
  { t: "OF AMERICA", x: 168, y: 134 },
  { t: "LOS ANGELES", x: 140, y: 167, kind: "city", anchor: "end", size: 12 },
  { t: "WASHINGTON", x: 390, y: 133, kind: "city", anchor: "end" },
  { t: "Sargasso Sea", x: 399, y: 192, kind: "sea", size: 15 },
  { t: "MÉXICO", x: 159, y: 232 },
  { t: "CIUDAD DE MÉXICO", x: 182, y: 260, kind: "city", anchor: "start" },
  { t: "HAITI", x: 328, y: 260 },
  { t: "COLOMBIA", x: 324, y: 348 },
  { t: "SURINAME", x: 420, y: 347 },
  { t: "المغرب", x: 699, y: 199 },
  { t: "MAURITANIA", x: 686, y: 243 },
  { t: "موريتانيا", x: 686, y: 268 },
  { t: "LIBYA", x: 842, y: 203 },
  { t: "ليبيا", x: 842, y: 228 },
  { t: "EGYPT", x: 905, y: 206 },
  { t: "مصر", x: 905, y: 232 },
  { t: "SAUDI ARABIA", x: 983, y: 210 },
  { t: "السعودية", x: 980, y: 235 },
  { t: "OMAN", x: 1063, y: 239 },
  { t: "عمان", x: 1063, y: 264 },
  { t: "ایران", x: 1049, y: 190 },
  { t: "NIGER", x: 792, y: 268 },
  { t: "CHAD", x: 847, y: 271 },
  { t: "تشاد", x: 847, y: 296 },
  { t: "NIGERIA", x: 785, y: 316 },
  { t: "SIERRA LEONE", x: 672, y: 321 },
  { t: "ETHIOPIA", x: 959, y: 302 },
  { t: "ኢትዮጵያ", x: 959, y: 323 },
  { t: "NAIROBI", x: 954, y: 380, kind: "city", anchor: "start" },
  { t: "Atlantic Ocean", x: 522, y: 292, kind: "sea", size: 18 },
  { t: "KAZAKHSTAN", x: 1161, y: 48, anchor: "end" },
  { t: "ҚАЗАҚСТАН", x: 1158, y: 68, anchor: "end" },
  { t: "TOJIKISTON", x: 1144, y: 112, anchor: "end" },
  { t: "MONGOLIA", x: 1330, y: 59 },
  { t: "МОНГОЛ УЛС", x: 1330, y: 79 },
  { t: "CHINA", x: 1336, y: 148 },
  { t: "中国", x: 1336, y: 170 },
  { t: "BEIJING", x: 1407, y: 115, kind: "city", anchor: "start" },
  { t: "北京市", x: 1407, y: 138, kind: "city", anchor: "start" },
  { t: "JAPAN", x: 1510, y: 137, anchor: "start" },
  { t: "PAKISTAN", x: 1144, y: 180 },
  { t: "پاکستان", x: 1144, y: 205 },
  { t: "NEPAL", x: 1217, y: 202 },
  { t: "INDIA", x: 1187, y: 240 },
  { t: "KOLKATA", x: 1247, y: 241, kind: "city", anchor: "start", size: 12 },
  { t: "TAIWAN", x: 1427, y: 220 },
  { t: "臺灣", x: 1427, y: 243 },
  { t: "VIỆT NAM", x: 1353, y: 279 },
  { t: "PHILIPPINES", x: 1437, y: 297 },
  { t: "SRI LANKA", x: 1198, y: 327 },
  { t: "Gulf of Thailand", x: 1319, y: 315, kind: "sea", size: 15 },
  { t: "SINGAPORE", x: 1405, y: 365, kind: "city", anchor: "end" },
];

type Marker = { x: number; y: number; n?: number };

const MARKERS: Marker[] = [
  { x: 50, y: 66, n: 4 }, { x: 43, y: 82, n: 5 }, { x: 107, y: 118, n: 2 }, { x: 44, y: 141, n: 11 },
  { x: 84, y: 153 }, { x: 66, y: 167, n: 3 }, { x: 100, y: 170, n: 2 }, { x: 202, y: 113, n: 3 },
  { x: 240, y: 110, n: 4 }, { x: 267, y: 123, n: 3 }, { x: 287, y: 96, n: 6 }, { x: 334, y: 72 },
  { x: 320, y: 82, n: 8 }, { x: 335, y: 107 }, { x: 317, y: 119, n: 8 }, { x: 300, y: 131, n: 22 },
  { x: 290, y: 144, n: 4 }, { x: 259, y: 168, n: 3 }, { x: 284, y: 174 }, { x: 188, y: 175, n: 5 },
  { x: 186, y: 194, n: 4 }, { x: 283, y: 221, n: 2 }, { x: 175, y: 260 }, { x: 937, y: 179, n: 6 },
  { x: 1028, y: 220, n: 4 }, { x: 1054, y: 224, n: 2 }, { x: 1383, y: 117, n: 3 }, { x: 1401, y: 125 },
  { x: 1424, y: 153 }, { x: 1461, y: 142, n: 8 }, { x: 1473, y: 159 }, { x: 1535, y: 155, n: 9 },
  { x: 1510, y: 163, n: 7 }, { x: 1331, y: 190 }, { x: 1423, y: 192 }, { x: 1178, y: 203 },
  { x: 1425, y: 232 }, { x: 1388, y: 241, n: 10 }, { x: 1154, y: 263, n: 11 }, { x: 1186, y: 273 },
  { x: 1185, y: 299, n: 3 }, { x: 1427, y: 289 }, { x: 1318, y: 355 }, { x: 1330, y: 366, n: 14 },
];

const MapSvg = styled.svg`
  display: block;
  width: 100%;
  height: 388px;
  font-family: Roboto, "DejaVu Sans", "Noto Sans CJK SC", sans-serif;
`;

const MapText = styled.text<{ $kind: LabelKind; $size: number }>`
  font-size: ${(p) => p.$size}px;
  font-weight: ${(p) => (p.$kind === "country" ? 500 : 400)};
  font-style: ${(p) => (p.$kind === "sea" ? "italic" : "normal")};
  letter-spacing: ${(p) => (p.$kind === "sea" ? (p.$size > 16 ? "3px" : "1px") : "normal")};
  fill: ${(p) => (p.$kind === "country" ? "#a3a2a6" : p.$kind === "city" ? "#6d6e76" : "#68676c")};
  stroke: #1f1e22;
  stroke-width: 2px;
  paint-order: stroke;
  dominant-baseline: central;
`;

const PinCount = styled.text`
  font-family: Inter, sans-serif;
  font-size: 13px;
  font-weight: 700;
  fill: #b7b5c9;
  text-anchor: middle;
  dominant-baseline: central;
`;

const ServerMark = ({ x, y }: Marker) => (
  <g transform={`translate(${x - 12} ${y - 11})`}>
    <rect width="24" height="9" rx="1.5" fill="#3347b8" />
    <rect y="12" width="24" height="9" rx="1.5" fill="#3347b8" />
    <path d="M16 4.500h2M19.500 4.500h2M16 16.500h2M19.500 16.500h2" stroke="#222a58" strokeWidth="2" />
  </g>
);

const ClusterMark = ({ x, y, n }: Marker) => (
  <g>
    <circle cx={x} cy={y} r="16" fill="#4c529a" />
    <circle cx={x} cy={y} r="12" fill="#4e5bc4" />
    <PinCount x={x} y={y}>{n}</PinCount>
  </g>
);

const WorldMap = () => (
  <MapSvg viewBox="0 0 1534 388" preserveAspectRatio="xMidYMid slice" role="img" aria-label="Deployment locations">
    <rect width="1534" height="388" fill="#202024" />
    <path d={LAND} fill="#2c2b30" stroke="#2c2b30" strokeWidth="1" />
    <path d={WATER} fill="#202024" />
    <g fill="none" stroke="#45444a" strokeWidth="1">
      <path d={STATE_LINES} strokeDasharray="3 2" strokeOpacity=".8" />
      <path d={RIVER_BORDERS} strokeOpacity=".8" />
      <path d={PROVINCES} strokeDasharray="2 2" strokeOpacity=".7" />
      <path d={NATION_LINES} strokeOpacity=".75" />
    </g>
    <g fill="none" stroke="#55555b" strokeWidth="3" strokeDasharray="3 2 2 3 5 2 1 3">
      <path d="M1147 137 1152 130M1148 144l12 3 14 9 8 6 7 10" />
      <path d="M1173 101l16-4M1177 113l10-9M1186 165l18 7" strokeWidth="1.5" />
      <path d="M1186 183l10 6 8 3M1236 202l26-3" strokeWidth="1.5" />
      <path d="M52 20l6 4 6 3" strokeWidth="1.5" />
    </g>
    {LABELS.map((l) => (
      <MapText
        key={l.t}
        x={l.x}
        y={l.y}
        $kind={l.kind ?? "country"}
        $size={l.size ?? 13}
        textAnchor={l.anchor ?? "middle"}
      >
        {l.t}
      </MapText>
    ))}
    <circle cx="1242" cy="241" r="2" fill="#6d6e76" />
    <path d="m948 375 1.500 4h4l-3.200 2.600 1.200 4-3.500-2.400-3.500 2.400 1.200-4-3.200-2.600h4Z" fill="#7c7b82" />
    {MARKERS.map((m) => (m.n ? <ClusterMark key={`${m.x}-${m.y}`} {...m} /> : <ServerMark key={`${m.x}-${m.y}`} {...m} />))}
  </MapSvg>
);

/* ------------------------------------------------------------------ shell */

const Page = styled.div`
  display: flex;
  min-height: 100vh;
  border-top: 4px solid #1c1b1f;
`;

const Sidebar = styled.nav`
  flex: none;
  display: flex;
  flex-direction: column;
  align-items: center;
  width: 64px;
  margin: 8px 0 12px 1px;
  padding: 18px 0 8px;
  border: 1px solid #464456;
  border-radius: 8px;
  background: #32313e;
  color: #a3a1bb;
`;

const SideItem = styled.a<{ $active?: boolean; $brand?: boolean; $tight?: boolean }>`
  position: relative;
  display: flex;
  align-items: center;
  justify-content: center;
  width: 46px;
  height: 48px;
  margin-bottom: ${(p) => (p.$tight ? 0 : 8)}px;
  padding: 0 0 ${(p) => (p.$brand ? 4 : 0)}px 2px;
  border-radius: 8px;
  color: ${(p) => (p.$brand ? "#696288" : "inherit")};
  background: ${(p) => (p.$active ? "#393747" : "transparent")};
`;

const SideRule = styled.hr`
  width: 46px;
  margin: 8px 0 16px;
  border: 0;
  border-top: 1px solid #4a485a;
`;

const SideSpacer = styled.div`
  flex: 1;
`;

const Badge = styled.span`
  position: absolute;
  top: -7px;
  right: -3px;
  width: 20px;
  height: 20px;
  border-radius: 10px;
  background: #9a625f;
  color: #c9c3c6;
  font-size: 13px;
  font-weight: 600;
  line-height: 20px;
  text-align: center;
`;

const Main = styled.main`
  flex: 1;
  min-width: 0;
  padding: 36px 171px 20px 116px;
`;

const Header = styled.header`
  display: flex;
  align-items: center;
  height: 42px;
  margin-bottom: 32px;
`;

const Title = styled.h1`
  margin: 0 16px 0 14px;
  padding-bottom: 4px;
  color: #a5a3b5;
  font-size: 30px;
  font-weight: 700;
  line-height: 36px;
`;

const StatusPill = styled.div`
  display: flex;
  align-items: center;
  height: 38px;
  padding: 0 9px 2px 8px;
  border: 1px solid #3c3a4b;
  border-radius: 12px;
  font-size: 12px;
  font-weight: 600;
`;

const StatusLink = styled.a`
  display: flex;
  align-items: center;
  gap: 2px;
  margin-left: 8px;
  color: #35936f;
  font-size: 14px;
  font-weight: 500;
  text-decoration: none;

  &::before {
    content: "";
    width: 6px;
    height: 6px;
    border-radius: 3px;
    background: #35936f;
  }
`;

const DeployButton = styled.button`
  display: flex;
  align-items: center;
  gap: 4px;
  height: 42px;
  margin-left: auto;
  padding: 0 12px 0 16px;
  border: 1px solid #c02c62;
  border-radius: 8px;
  background: transparent;
  color: #c02c62;
  font-size: 18px;
  font-weight: 600;
`;

const panel = css`
  border: 1px solid #3c3a4b;
  border-radius: 8px;
  background: #1e1d29;
`;

const Stats = styled.section`
  display: grid;
  grid-template-columns: repeat(3, 1fr);
  gap: 16px;
  margin-bottom: 32px;
`;

const StatCard = styled.article`
  ${panel}
  display: flex;
  align-items: center;
  gap: 14px;
  height: 94px;
  padding: 0 18px 0 16px;
`;

const StatBody = styled.div`
  flex: 1;
  padding-top: 2px;
`;

const StatTitle = styled.h2`
  font-size: 16px;
  font-weight: 600;
  line-height: 24px;
`;

const StatValue = styled.p`
  display: flex;
  align-items: baseline;
  gap: 6px;
  margin-top: 4px;
  font-size: 14px;
  font-weight: 600;
  line-height: 32px;

  strong {
    color: #a5a3b5;
    font-size: 24px;
    font-weight: 700;
  }
`;

const Chart = styled.section`
  ${panel}
  margin-bottom: 40px;
  padding: 16px 34px 20px 0;
`;

const ChartHead = styled.div`
  display: flex;
  align-items: center;
  gap: 8px;
  height: 28px;
  margin: 0 0 18px 28px;
`;

const ChartTitle = styled.h2`
  margin-right: 8px;
  font-size: 16px;
  font-weight: 600;
`;

const RangeButton = styled.button<{ $on?: boolean }>`
  height: 28px;
  padding: 0 12px;
  border: 0;
  border-radius: 14px;
  background: ${(p) => (p.$on ? "#393746" : "#31313c")};
  color: #454263;
  font-weight: 700;
`;

const PlotRow = styled.div`
  display: flex;
  gap: 12px;
`;

const YAxis = styled.div`
  display: flex;
  flex-direction: column;
  justify-content: space-between;
  width: 32px;
  margin: -7px 0 -5px;
  color: #57575d;
  font: 12px/14px "Liberation Sans", sans-serif;
  text-align: right;
`;

const Plot = styled.div`
  flex: 1;
  height: 140px;
  border-bottom: 3px solid #2e3ea0;
  background: #252530;
`;

const XAxis = styled.div`
  display: flex;
  justify-content: space-between;
  margin: 9px 0 0 44px;
  color: #57575d;
  font: 12px/14px "Liberation Sans", sans-serif;
`;

const Tick = styled.span`
  display: flex;
  justify-content: center;
  width: 0;
`;

const MapPanel = styled.section`
  position: relative;
  overflow: hidden;
  border: 1px solid #3c3a4b;
  border-radius: 8px;
`;

const MapTools = styled.div`
  position: absolute;
  top: 12px;
  left: 12px;
  display: flex;
  align-items: flex-start;
  gap: 8px;
`;

const Zoom = styled.div`
  display: flex;
  flex-direction: column;
  width: 30px;
  margin-right: 14px;
  border-radius: 2px;
  overflow: hidden;
`;

const ZoomButton = styled.button<{ $off?: boolean }>`
  height: 30px;
  padding: 6px 0 0;
  border: 0;
  border-bottom: ${(p) => (p.$off ? 0 : 1)}px solid #8f8e93;
  background: ${(p) => (p.$off ? "#b0afb4" : "#b7b6bb")};
  color: ${(p) => (p.$off ? "#88878b" : "#0c0c0e")};
  font: bold 22px/22px "Liberation Mono", monospace;
`;

const LayerButton = styled.button<{ $on?: boolean }>`
  height: 38px;
  margin-top: 4px;
  padding: 0 16px;
  border: 1px solid #3e3c4d;
  border-radius: 19px;
  background: ${(p) => (p.$on ? "#373546" : "#31303d")};
  color: #454263;
  font-size: 14px;
  font-weight: 700;
`;

const Attribution = styled.div`
  position: absolute;
  right: 0;
  bottom: 0;
  display: flex;
  align-items: center;
  gap: 3px;
  height: 17px;
  padding: 0 5px;
  background: rgba(158, 157, 162, 0.96);
  color: #45454a;
  font-size: 12px;
  line-height: 16px;

  a {
    color: #1f6687;
    text-decoration: none;
  }
`;

const Flag = styled.svg`
  display: block;
`;

const HelpButton = styled.button`
  position: fixed;
  right: 39px;
  bottom: 46px;
  width: 42px;
  height: 42px;
  padding: 0;
  border: 0;
  background: transparent;
`;

/* ----------------------------------------------------------- account menu */

const Overlay = styled.div`
  position: fixed;
  inset: 23px 0 0 18px;
  display: flex;
  align-items: center;
  justify-content: center;
  pointer-events: none;
`;

const Dialog = styled.div`
  position: relative;
  display: flex;
  width: 672px;
  border: 1px solid #4b495c;
  border-radius: 12px;
  background: #353342;
  color: #968abf;
  box-shadow: 0 8px 24px rgba(20, 19, 24, 0.35);
  pointer-events: auto;
`;

const AccountSide = styled.div`
  width: 336px;
  padding: 32px;
`;

const Caption = styled.label`
  display: block;
  color: #736b92;
  font-size: 14px;
  font-weight: 500;
  line-height: 20px;
`;

const Email = styled.p`
  margin: 8px 0 20px;
  font-size: 16px;
  font-weight: 700;
  line-height: 24px;
`;

const SelectBox = styled.div`
  position: relative;
  margin-top: 12px;

  svg {
    position: absolute;
    top: 21px;
    right: 14px;
    pointer-events: none;
  }
`;

const OrgSelect = styled.select`
  width: 100%;
  height: 58px;
  padding: 0 16px;
  border: 1px solid #4b495c;
  border-radius: 6px;
  background: #1e1d29;
  font-size: 14px;
  font-weight: 700;
  appearance: none;
`;

const Rule = styled.hr`
  margin: 20px 0 28px;
  border: 0;
  border-top: 1px solid #514e61;
`;

const ModeRow = styled.div`
  display: flex;
  align-items: center;
  justify-content: center;
  gap: 10px;
  margin-bottom: 12px;
  font-size: 14px;
  font-weight: 700;
`;

const Toggle = styled.div`
  display: flex;
  align-items: center;
  width: 96px;
  height: 48px;
  margin-left: 14px;
  padding: 0 6px;
  border-radius: 12px;
  background: #3c3b46;
`;

const ToggleButton = styled.button<{ $on?: boolean }>`
  display: flex;
  align-items: center;
  justify-content: center;
  width: ${(p) => (p.$on ? 40 : 44)}px;
  height: 40px;
  padding: 0;
  border: 0;
  border-radius: 8px;
  background: ${(p) => (p.$on ? "#1e1d29" : "transparent")};
  color: ${(p) => (p.$on ? "#968abf" : "#857ba9")};
`;

const Credits = styled.div`
  height: 74px;
  border: 1px dashed #504e5f;
  border-radius: 37px;
  background: #3c3b46;
  font-size: 16px;
  line-height: 74px;
  text-align: center;

  strong {
    font-weight: 700;
  }
`;

const MenuSide = styled.div`
  flex: 1;
  display: flex;
  flex-direction: column;
  gap: 2px;
  padding: 44px 26px 32px 22px;
  border-left: 1px solid #4b495c;
  border-radius: 0 11px 11px 0;
  background: #3c3b46;
`;

const CloseButton = styled.button`
  position: absolute;
  top: 12px;
  right: 12px;
  display: flex;
  padding: 0;
  border: 0;
  background: transparent;
`;

const MenuLink = styled.a<{ $marked?: boolean }>`
  display: flex;
  align-items: center;
  gap: 11px;
  height: 42px;
  padding: 0 5px 0 10px;
  border: 3px solid ${(p) => (p.$marked ? "#ff0000" : "transparent")};
  border-radius: 2px;
  color: inherit;
  font-size: 16px;
  font-weight: 600;
  text-decoration: none;
`;

const MenuIcon = styled.span`
  display: flex;
  flex: none;
  justify-content: center;
  width: 26px;

  svg {
    flex: none;
  }
`;

const MenuName = styled.span`
  flex: 1;
`;

const MENU = [
  { name: "Account Settings", icon: <Gears />, end: <Chevron /> },
  { name: "Subscriptions", icon: <Card />, end: <Chevron /> },
  { name: "Tokens", icon: <KeyToken />, end: <Chevron />, marked: true },
  { name: "Documentation", icon: <FolderDoc />, end: <External /> },
  { name: "Discord Community", icon: <Discord />, end: <External /> },
  { name: "Request Help", icon: <WrenchChat />, end: <External /> },
  { name: "Service Status", icon: <Cloche />, end: <External /> },
  { name: "Terms of Service", icon: <Scales />, end: <External /> },
  { name: "Logout", icon: <Door /> },
];

const AccountMenu = () => (
  <Overlay>
    <Dialog role="dialog" aria-label="Account">
      <AccountSide>
        <Caption as="p">Signed in as</Caption>
        <Email>support@betide.studio</Email>
        <Caption htmlFor="organization">Organization</Caption>
        <SelectBox>
          <OrgSelect id="organization" defaultValue="betide">
            <option value="betide">Betide Studio</option>
          </OrgSelect>
          <UpDown />
        </SelectBox>
        <Rule />
        <ModeRow>
          <Question />
          <span>Guided Mode</span>
          <Toggle role="group" aria-label="Guided Mode">
            <ToggleButton aria-label="Expert" aria-pressed="false"><Forest /></ToggleButton>
            <ToggleButton aria-label="Guided" aria-pressed="true" $on><Sprout /></ToggleButton>
          </Toggle>
        </ModeRow>
        <ModeRow>
          <Palette />
          <span>Color Theme</span>
          <Toggle role="group" aria-label="Color Theme">
            <ToggleButton aria-label="Light" aria-pressed="false"><CloudSun /></ToggleButton>
            <ToggleButton aria-label="Dark" aria-pressed="true" $on><CloudMoon /></ToggleButton>
          </Toggle>
        </ModeRow>
        <Credits>
          Available credits: <strong>$0.00</strong>
        </Credits>
      </AccountSide>
      <MenuSide>
        {MENU.map((m) => (
          <MenuLink key={m.name} href="#" $marked={m.marked}>
            <MenuIcon>{m.icon}</MenuIcon>
            <MenuName>{m.name}</MenuName>
            {m.end}
          </MenuLink>
        ))}
      </MenuSide>
      <CloseButton aria-label="Close"><Cross /></CloseButton>
    </Dialog>
  </Overlay>
);

/* -------------------------------------------------------------- dashboard */

const Y_TICKS = [10, 8, 6, 4, 2, 0];
const X_TICKS = ["12:30", "12:35", "12:40", "12:45", "12:50", "12:55", "01:00", "01:05", "01:10", "01:15", "01:20", "01:25", "01:30"];

const STATS = [
  { title: "Average deployment time (Last 24hr)", value: "N/A", unit: "", icon: <Stopwatch /> },
  { title: "Current player count", value: "0", unit: "players", icon: <Players /> },
  { title: "Current deployment count", value: "0", unit: "deployments", icon: <Console /> },
];

const PRIMARY_NAV = [
  { name: "Applications", icon: <CubeGrid /> },
  { name: "Deployments", icon: <Rocket /> },
  { name: "Matchmaking", icon: <TreeNodes /> },
  { name: "Relays", icon: <Tower /> },
];

const SECONDARY_NAV = [
  { name: "Registry", icon: <Conveyor /> },
  { name: "Files", icon: <FolderDoc /> },
  { name: "Integrations", icon: <Flame /> },
  { name: "Fleets", icon: <Ship /> },
  { name: "Guides", icon: <BookChat /> },
];

export default function App() {
  return (
    <>
      <GlobalStyle />
      <Page>
        <Sidebar aria-label="Main">
          <SideItem href="#" aria-label="Home" $brand><HexLogo /></SideItem>
          <SideItem href="#" aria-label="Dashboard" $active><Summit /></SideItem>
          {PRIMARY_NAV.map((n) => (
            <SideItem key={n.name} href="#" aria-label={n.name}>{n.icon}</SideItem>
          ))}
          <SideRule />
          {SECONDARY_NAV.map((n) => (
            <SideItem key={n.name} href="#" aria-label={n.name} $tight>{n.icon}</SideItem>
          ))}
          <SideSpacer />
          <SideItem href="#" aria-label="Notifications">
            <Bell />
            <Badge>2</Badge>
          </SideItem>
          <SideItem href="#" aria-label="Account" $tight><Avatar /></SideItem>
        </Sidebar>

        <Main>
          <Header>
            <Summit w={38} h={34} />
            <Title>Dashboard</Title>
            <StatusPill>
              STATUS
              <StatusLink href="#">All systems are operational</StatusLink>
            </StatusPill>
            <DeployButton>
              <Rocket w={20} h={23} />
              Deploy
            </DeployButton>
          </Header>

          <Stats>
            {STATS.map((s) => (
              <StatCard key={s.title}>
                {s.icon}
                <StatBody>
                  <StatTitle>{s.title}</StatTitle>
                  <StatValue>
                    <strong>{s.value}</strong>
                    {s.unit}
                  </StatValue>
                </StatBody>
                <Info />
              </StatCard>
            ))}
          </Stats>

          <Chart>
            <ChartHead>
              <ChartTitle>Recent Deployments</ChartTitle>
              <RangeButton $on>Recent</RangeButton>
              <RangeButton>Last 12hr</RangeButton>
              <RangeButton>Last 24hr</RangeButton>
            </ChartHead>
            <PlotRow>
              <YAxis>{Y_TICKS.map((t) => <span key={t}>{t}</span>)}</YAxis>
              <Plot />
            </PlotRow>
            <XAxis>{X_TICKS.map((t) => <Tick key={t}>{t}</Tick>)}</XAxis>
          </Chart>

          <MapPanel>
            <WorldMap />
            <MapTools>
              <Zoom>
                <ZoomButton aria-label="Zoom in">+</ZoomButton>
                <ZoomButton aria-label="Zoom out" $off>−</ZoomButton>
              </Zoom>
              <LayerButton $on>Locations</LayerButton>
              <LayerButton>Players</LayerButton>
            </MapTools>
            <Attribution>
              <Flag width="12" height="8" viewBox="0 0 12 8" aria-hidden="true">
                <path d="M0 0h12v4H0Z" fill="#3c5fae" />
                <path d="M0 4h12v4H0Z" fill="#b79a12" />
              </Flag>
              <a href="#">Leaflet</a>
              <span>|</span>
              <span>©</span>
              <a href="#">Stadia Maps</a>
              <span>©</span>
              <a href="#">OpenMapTiles</a>
              <span>©</span>
              <a href="#">OpenStreetMap</a>
              <span>contributors</span>
            </Attribution>
          </MapPanel>
        </Main>
      </Page>
      <HelpButton aria-label="Help"><Buoy /></HelpButton>
      <AccountMenu />
    </>
  );
}
